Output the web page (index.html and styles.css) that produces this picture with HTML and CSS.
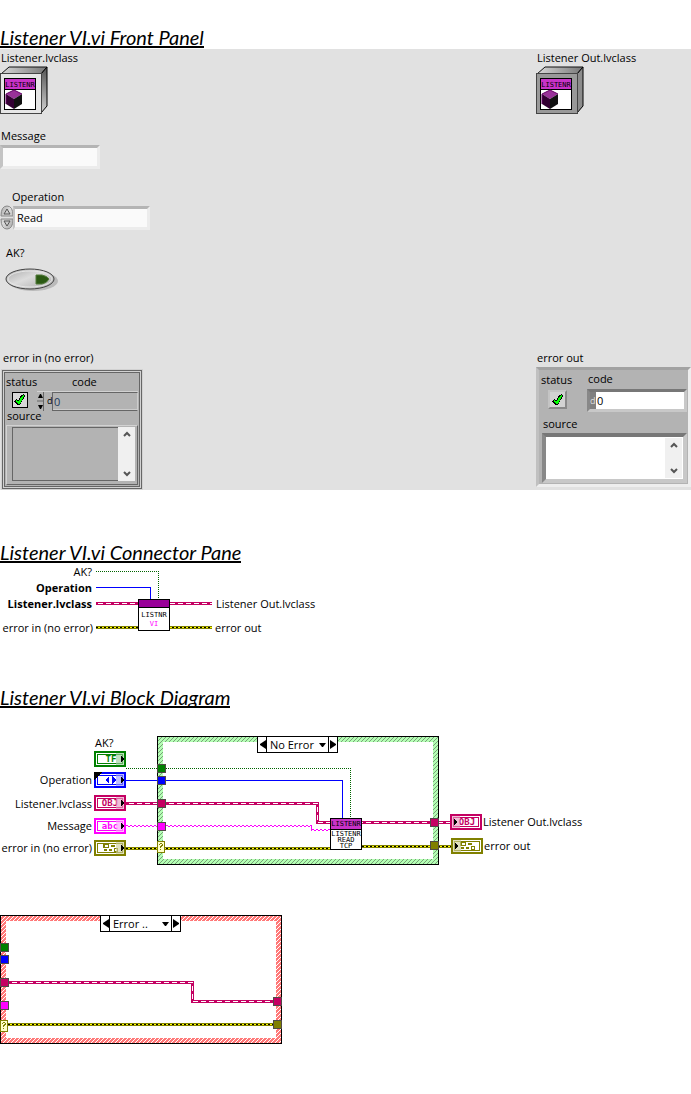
FILE: index.html
```html
<!DOCTYPE html>
<html lang="en">
<head>
<meta charset="utf-8">
<title>Listener VI.vi</title>
<link rel="stylesheet" href="styles.css">
</head>
<body>
<svg class="defs" width="0" height="0" aria-hidden="true">
  <defs>
    <linearGradient id="topFace" x1="0" x2="1" y1="0" y2="0"><stop offset="0" stop-color="#d8d8d8"/><stop offset="1" stop-color="#777"/></linearGradient>
    <linearGradient id="sideFace" x1="0" x2="0" y1="0" y2="1"><stop offset="0" stop-color="#555"/><stop offset="1" stop-color="#d0d0d0"/></linearGradient>
    <linearGradient id="metal" x1="0" x2="1" y1="0" y2="1"><stop offset="0" stop-color="#aaa"/><stop offset=".45" stop-color="#dcdcdc"/><stop offset="1" stop-color="#a8a8a8"/></linearGradient>
    <linearGradient id="hatchGreen" gradientUnits="userSpaceOnUse" x1="0" y1="0" x2="2" y2="2" spreadMethod="repeat"><stop offset=".625" stop-color="#b4ffb4"/><stop offset=".625" stop-color="#78a078"/><stop offset=".875" stop-color="#78a078"/><stop offset=".875" stop-color="#b4ffb4"/></linearGradient>
    <linearGradient id="hatchRed" gradientUnits="userSpaceOnUse" x1="0" y1="0" x2="2" y2="2" spreadMethod="repeat"><stop offset=".625" stop-color="#ff7878"/><stop offset=".625" stop-color="#fff"/><stop offset=".875" stop-color="#fff"/><stop offset=".875" stop-color="#ff7878"/></linearGradient>
    <symbol id="badge" viewBox="0 0 32 32">
      <rect width="32" height="32" fill="#000"/><rect x="1" y="1" width="30" height="10" fill="#c832c8"/><rect x="1" y="12" width="30" height="19" fill="#fff"/>
      <text class="pixel" x="16" y="9" text-anchor="middle">LISTENR</text>
      <g class="smooth"><path d="M2 16l8-4 8 4-8 5z" fill="#993299"/><path d="M2 16l8 5v10l-8-5z" fill="#330033"/><path d="M18 16l-8 5v10l8-5z" fill="#111"/>
      <path d="M2 26V16l8-4 8 4" fill="none" stroke="#660066"/></g>
    </symbol>
    <symbol id="tick" viewBox="0 0 12 12"><path d="M0 7l2-2 2 2 3-6 3-1 1 2-5 9H3z"/><path d="M1 7l1-1 2 2 4-6 2-1v1l-4 8H4z" fill="#0f0"/></symbol>
    <symbol id="chevUp" viewBox="0 0 8 6"><path class="smooth-path" d="M1 5l3-3 3 3" fill="none" stroke="#555" stroke-width="2"/></symbol>
    <symbol id="chevDown" viewBox="0 0 8 6"><path class="smooth-path" d="M1 1l3 3 3-3" fill="none" stroke="#555" stroke-width="2"/></symbol>
    <symbol id="terminal" viewBox="0 0 32 16"><rect width="32" height="16" fill="currentColor"/><rect x="2" y="2" width="28" height="12" fill="#fff"/><rect x="3" y="3" width="26" height="10" fill="currentColor"/><rect x="4" y="4" width="24" height="8" fill="#fff"/></symbol>
    <symbol id="inEdge" viewBox="0 0 32 16"><rect x="22" y="2" width="8" height="12" fill="#fff" opacity=".5"/><rect x="22" y="2" width="8" height="12" fill="currentColor" opacity=".25"/><path d="M27 5h1v1h1v1h1v2h-1v1h-1v1h-1z"/></symbol>
    <symbol id="outEdge" viewBox="0 0 32 16"><rect x="2" y="2" width="8" height="12" fill="#fff" opacity=".5"/><rect x="2" y="2" width="8" height="12" fill="currentColor" opacity=".25"/><path d="M4 5h1v1h1v1h1v2h-1v1h-1v1h-1z"/></symbol>
    <symbol id="clusterGlyph" viewBox="0 0 16 8"><path d="M1 0h6v4h-6zM9 1h4v2h-4zM2 5h3v2h-3zM7 5h3v2h-3zM12 4h4v4h-4z" fill="#808000"/><path d="M3 1h3v2h-3zM13 5h2v2h-2z" fill="#fff"/></symbol>
    <symbol id="help" viewBox="0 0 8 12"><rect width="8" height="12" fill="#808000"/><rect x="1" y="1" width="6" height="10" fill="#ffffc8"/><path d="M2 3h1v-1h2v1h1v2h-1v1h-1v1h-1v-2h1v-1h1v-1h-2v1h-1zM3 8h1v1h-1z" fill="#808000"/></symbol>
  </defs>
</svg>

<main>
<section>
  <h2 class="title">Listener VI.vi Front Panel</h2>
  <div class="panel">
    <div class="column">
      <div class="object">
        <span class="caption">Listener.lvclass</span>
        <svg class="cube" width="48" height="48" viewBox="0 0 48 48"><path d="M1 8l8-7h38l-6 7z" fill="url(#topFace)" stroke="#111"/><path d="M41 8l6-7v39l-6 7z" fill="url(#sideFace)" stroke="#000"/><rect y="7" width="42" height="41" fill="#444"/><rect x="1" y="8" width="40" height="39" fill="#e6e6e6"/><use href="#badge" x="4" y="12" width="32" height="32"/></svg>
      </div>
      <div class="object message">
        <label class="caption" for="message">Message</label>
        <input class="sunken" id="message" type="text">
      </div>
      <div class="object operation">
        <label class="caption" for="operation">Operation</label>
        <div class="ring">
          <button class="knob" type="button" aria-label="Change operation"><svg width="14" height="25" viewBox="0 0 14 25"><path d="M1 11Q1 1 7 1t6 10zM1 14Q1 24 7 24t6-10z" fill="url(#metal)" stroke="#888"/><path d="M4 9l3-5 3 5zM4 16h6l-3 5z" fill="#ccc" stroke="#555"/></svg></button>
          <input class="sunken" id="operation" type="text" value="Read">
        </div>
      </div>
      <div class="object ack">
        <span class="caption" id="ak">AK?</span>
        <button class="pill" type="button" aria-labelledby="ak"><svg width="56" height="28" viewBox="0 0 56 28"><ellipse cx="29" cy="16" rx="25" ry="10" fill="#aaa" opacity=".7"/><ellipse cx="26" cy="14" rx="24" ry="10" fill="url(#metal)" stroke="#444"/><ellipse cx="26" cy="14" rx="22" ry="8" fill="none" stroke="#e6e6e6"/><path d="M32 10h6q5 1 7 4-2 4-7 5h-6z" fill="#2b5a13" stroke="#527a3b"/></svg></button>
      </div>
      <div class="object error-in">
        <span class="caption">error in (no error)</span>
        <div class="cluster cluster-in">
          <label class="status"><span>status</span><span class="check"><input type="checkbox" checked><svg width="12" height="12"><use href="#tick"/></svg></span></label>
          <div class="code">
            <label for="code-in">code</label>
            <div class="numeric">
              <button class="step" type="button" aria-label="Step code"><svg width="7" height="20" viewBox="0 0 7 20"><path d="M1 6l2-4h1l2 4zM1 13h5l-2 4h-1z"/><path d="M0 9h7" stroke="#666"/></svg></button>
              <span class="radix">d</span><input id="code-in" type="text" value="0">
            </div>
          </div>
          <div class="source">
            <label for="source-in">source</label>
            <div class="scroller"><textarea id="source-in"></textarea><div class="bar"><svg width="8" height="6"><use href="#chevUp"/></svg><svg width="8" height="6"><use href="#chevDown"/></svg></div></div>
          </div>
        </div>
      </div>
    </div>
    <div class="column outputs">
      <div class="object">
        <span class="caption">Listener Out.lvclass</span>
        <svg class="cube" width="48" height="48" viewBox="0 0 48 48"><path d="M1 8l8-7h38l-6 7z" fill="url(#topFace)" stroke="#111"/><path d="M41 8l6-7v39l-6 7z" fill="#8c8c8c" stroke="#000"/><rect y="7" width="42" height="41" fill="#444"/><rect x="1" y="8" width="40" height="39" fill="#999"/><use href="#badge" x="4" y="12" width="32" height="32"/></svg>
      </div>
      <div class="object error-out">
        <span class="caption">error out</span>
        <div class="cluster cluster-out">
          <label class="status"><span>status</span><span class="check"><input type="checkbox" checked><svg width="12" height="12"><use href="#tick"/></svg></span></label>
          <div class="code">
            <label for="code-out">code</label>
            <div class="numeric"><span class="radix">d</span><input id="code-out" type="text" value="0" readonly></div>
          </div>
          <div class="source">
            <label for="source-out">source</label>
            <div class="scroller"><textarea id="source-out" readonly></textarea><div class="bar"><svg width="8" height="6"><use href="#chevUp"/></svg><svg width="8" height="6"><use href="#chevDown"/></svg></div></div>
          </div>
        </div>
      </div>
    </div>
  </div>
</section>

<section class="connector">
  <h2 class="title">Listener VI.vi Connector Pane</h2>
  <svg class="drawing" width="340" height="72" viewBox="0 0 340 72">
    <g class="wires" transform="translate(.5 .5)">
      <path class="bool" d="M95 8H158V36"/>
      <path class="enum" d="M95 24H150V36"/>
      <path class="obj" d="M95 40H211"/><path class="obj-core" d="M97 40H211"/>
      <path class="err" d="M95 64H211"/><path class="err-core" d="M95 64H211"/><path class="err-dash" d="M95 64H211"/>
    </g>
    <rect x="138" y="36" width="32" height="32"/><rect x="139" y="37" width="30" height="7" fill="#909"/><rect x="139" y="45" width="30" height="22" fill="#fff"/>
    <text class="pixel" x="154" y="54" text-anchor="middle">LISTNR</text>
    <text class="pixel magenta" x="154" y="63" text-anchor="middle">VI</text>
    <g class="names">
      <text class="end" x="92" y="13">AK?</text>
      <text class="end strong" x="92" y="29">Operation</text>
      <text class="end strong" x="92" y="45">Listener.lvclass</text>
      <text class="end" x="93" y="69">error in (no error)</text>
      <text x="216" y="45">Listener Out.lvclass</text>
      <text x="215" y="69">error out</text>
    </g>
  </svg>
</section>

<section class="block">
  <h2 class="title">Listener VI.vi Block Diagram</h2>
  <div class="canvas first">
    <svg class="drawing" width="600" height="129" viewBox="0 0 600 129">
      <rect x="157" width="282" height="129"/><rect x="158" y="1" width="280" height="127" fill="url(#hatchGreen)"/><rect x="163" y="6" width="270" height="117" fill="#fff"/>
      <g class="wires" transform="translate(.5 .5)">
        <path class="bool" d="M125 32H350V82"/>
        <path class="enum" d="M125 44H342V82"/>
        <path class="obj" d="M125 67H317V86H450"/><path class="obj-core" d="M128 67H317V86H450"/>
        <path class="str" d="M125 89H311M311 93H330"/><path class="str shifted" d="M125 90H311M311 94H330"/><path class="str-join" d="M311 89V94"/>
        <path class="err" d="M125 112H330M361 110H452"/><path class="err-core" d="M125 112H330M361 110H452"/><path class="err-dash" d="M125 112H330M361 110H452"/>
      </g>
      <g stroke="#504a46">
        <path d="M157 28h9v9h-9z" class="tunnel green"/><path d="M157 40h9v9h-9z" class="tunnel blue"/><path d="M157 63h9v9h-9z" class="tunnel crimson"/><path d="M157 86h9v9h-9z" class="tunnel pink"/><path d="M430 82h9v9h-9z" class="tunnel crimson"/><path d="M430 105h9v9h-9z" class="tunnel olive"/>
      </g>
      <use href="#help" x="157" y="105" width="8" height="12"/>
      <g color="#008000"><use href="#terminal" x="94" y="15" width="32" height="16"/><text class="kind" x="111" y="26">TF</text><use href="#inEdge" x="94" y="15" width="32" height="16"/></g>
      <g color="#0000ff"><use href="#terminal" x="94" y="36" width="32" height="16"/><path d="M109 40v8l-4-4zM112 40v8l4-4z" fill="#00f"/><use href="#inEdge" x="94" y="36" width="32" height="16"/><path d="M94 36h8l-8 8z"/></g>
      <g color="#c40062"><use href="#terminal" x="94" y="59" width="32" height="16"/><text class="kind" x="110" y="70">OBJ</text><use href="#inEdge" x="94" y="59" width="32" height="16"/></g>
      <g color="#ff00ff"><use href="#terminal" x="94" y="82" width="32" height="16"/><text class="kind" x="110" y="93">abc</text><use href="#inEdge" x="94" y="82" width="32" height="16"/></g>
      <g color="#808000"><use href="#terminal" x="94" y="104" width="32" height="16"/><use href="#clusterGlyph" x="102" y="108" width="16" height="8"/><use href="#inEdge" x="94" y="104" width="32" height="16"/></g>
      <g color="#c40062"><use href="#terminal" x="450" y="78" width="32" height="16"/><text class="kind" x="467" y="89">OBJ</text><use href="#outEdge" x="450" y="78" width="32" height="16"/></g>
      <g color="#808000"><use href="#terminal" x="451" y="102" width="32" height="16"/><use href="#clusterGlyph" x="459" y="106" width="16" height="8"/><use href="#outEdge" x="451" y="102" width="32" height="16"/></g>
      <rect x="330" y="82" width="32" height="32"/><rect x="331" y="83" width="30" height="10" fill="#c832c8"/><rect x="331" y="94" width="30" height="19" fill="#fff"/>
      <text class="pixel" x="346" y="90" text-anchor="middle">LISTENR</text>
      <text class="pixel" x="346" y="100" text-anchor="middle">LISTENR</text>
      <text class="pixel" x="346" y="106" text-anchor="middle">READ</text>
      <text class="pixel" x="346" y="112" text-anchor="middle">TCP</text>
      <g class="names">
        <text x="95" y="11">AK?</text>
        <text class="end" x="92" y="48">Operation</text>
        <text class="end" x="92" y="72">Listener.lvclass</text>
        <text class="end" x="92" y="94">Message</text>
        <text class="end" x="92" y="116">error in (no error)</text>
        <text x="483" y="90">Listener Out.lvclass</text>
        <text x="484" y="114">error out</text>
      </g>
    </svg>
    <div class="case-selector">
      <button type="button" aria-label="Previous case"><svg width="7" height="9" viewBox="0 0 7 9"><path d="M7 0v9L1 5V4z"/></svg></button>
      <span class="pick"><select aria-label="Case"><option>No Error</option><option>Error ..</option></select><svg width="7" height="4" viewBox="0 0 7 4"><path d="M0 0h7L4 4H3z"/></svg></span>
      <button type="button" aria-label="Next case"><svg width="7" height="9" viewBox="0 0 7 9"><path d="M0 0v9l6-4V4z"/></svg></button>
    </div>
  </div>
  <div class="canvas second">
    <svg class="drawing" width="282" height="129" viewBox="0 0 282 129">
      <rect width="282" height="129"/><rect x="1" y="1" width="280" height="127" fill="url(#hatchRed)"/><rect x="6" y="6" width="270" height="117" fill="#fff"/>
      <g class="wires" transform="translate(.5 .5)">
        <path class="obj" d="M8 67H192V86H273"/><path class="obj-core" d="M11 67H192V86H273"/>
        <path class="err" d="M7 109H273"/><path class="err-core" d="M7 109H273"/><path class="err-dash" d="M7 109H273"/>
      </g>
      <g stroke="#504a46">
        <path d="M0 28h9v9h-9z" class="tunnel green"/><path d="M0 40h9v9h-9z" class="tunnel blue"/><path d="M0 63h9v9h-9z" class="tunnel crimson"/><path d="M0 86h9v9h-9z" class="tunnel pink"/><path d="M273 82h9v9h-9z" class="tunnel crimson"/><path d="M273 105h9v9h-9z" class="tunnel olive"/>
      </g>
      <use href="#help" x="0" y="105" width="8" height="12"/>
    </svg>
    <div class="case-selector">
      <button type="button" aria-label="Previous case"><svg width="7" height="9" viewBox="0 0 7 9"><path d="M7 0v9L1 5V4z"/></svg></button>
      <span class="pick"><select aria-label="Case"><option>Error ..</option><option>No Error</option></select><svg width="7" height="4" viewBox="0 0 7 4"><path d="M0 0h7L4 4H3z"/></svg></span>
      <button type="button" aria-label="Next case"><svg width="7" height="9" viewBox="0 0 7 9"><path d="M0 0v9l6-4V4z"/></svg></button>
    </div>
  </div>
</section>
</main>
</body>
</html>
```
FILE: styles.css
```css
* { box-sizing: border-box; }
body { margin: 0; background: #fff; color: #000; font: 11px/16px "Open Sans", "Noto Sans", sans-serif; }
main { padding: 28px 0 50px; }
button, input, select, textarea { margin: 0; padding: 0; border: 0; border-radius: 0; background: none; color: inherit; font: inherit; appearance: none; outline: 0; }
svg { display: block; flex: none; }
.defs { position: absolute; }

.title { width: fit-content; height: 20px; margin: 0; border-bottom: 2px solid #000; font: italic 400 20px/18px Lato, "Open Sans", sans-serif; white-space: nowrap; }
.pixel { font: 7px "DejaVu Sans Mono", monospace; }
.magenta { fill: #f0f; }

/* Front panel */
.panel { display: flex; justify-content: space-between; padding-top: 1px; background: #e1e1e1; margin-top: 1px; }
.column { display: flex; flex-direction: column; }
.outputs { width: 155px; }
.object { display: flex; flex-direction: column; align-items: flex-start; }
.caption { padding-left: 1px; }
.message { margin-top: 14px; gap: 1px; }
.operation { margin-top: 20px; }
.operation .caption { padding-left: 12px; }
.sunken { border: 3px solid; border-color: #b4b4b4 #ececec #ececec #c4c4c4; background: #fafafa; height: 24px; width: 100px; }
.ring { display: flex; align-items: center; }
.knob { width: 13px; height: 25px; }
.ring .sunken { width: 137px; padding-left: 2px; border-left-width: 2px; }
.ack { margin: 15px 0 57px; }
.ack .caption { padding-left: 6px; }
.pill { margin: 4px 0 0 4px; }
.error-in .caption { padding-left: 3px; }
.error-out { margin-top: 236px; }

/* Error clusters */
.cluster { display: grid; background: #b3b3b3; }
.cluster label { line-height: 16px; }
.check { display: grid; place-items: center; }
.check > * { grid-area: 1 / 1; }
.check input { width: 100%; height: 100%; }
.check svg { pointer-events: none; }
.status, .code, .source { display: flex; flex-direction: column; align-items: flex-start; min-width: 0; }
.source { grid-column: 1 / -1; }
.numeric, .scroller { display: flex; width: 100%; }
.numeric input { flex: 1; width: 0; min-width: 0; }
.scroller textarea { flex: 1; width: 0; min-width: 0; height: 100%; resize: none; }
.bar { display: flex; flex-direction: column; justify-content: space-between; align-items: center; width: 17px; padding: 4px 0; background: #f0f0f0; }

.cluster-in { grid-template-columns: 29px minmax(0, 1fr); width: 142px; height: 121px; margin: 3px 0 0 1px; padding: 5px; box-shadow: inset 0 0 0 1px #d2d2d2, inset 0 0 0 2px #666, inset 0 0 0 3px #d2d2d2, inset 0 0 0 4px #666; align-content: start; }
.cluster-in .check { width: 16px; height: 16px; margin: 2px 0 0 6px; border: 1px solid #000; background: #d8d8d8; }
.cluster-in .code label { padding-left: 37px; }
.cluster-in .numeric { height: 20px; margin-top: 1px; margin-left: 2px; width: 101px; border: solid #d2d2d2; border-width: 1px 0 0; }
.cluster-in .step { width: 7px; border-right: 1px solid #666; }
.cluster-in .radix { width: 8px; padding-left: 3px; font-size: 9px; line-height: 18px; }
.cluster-in .numeric input { border: 1px solid #666; border-right-color: #ccc; box-shadow: inset 0 -1px #ccc; padding-left: 1px; color: #223a5a; }
.cluster-in .source { margin-top: -3px; }
.cluster-in .source label { padding-left: 1px; }
.cluster-in .scroller { height: 60px; margin-top: 1px; border: 1px solid; border-color: #d2d2d2 #666 #666 #d2d2d2; padding: 1px 2px 3px 5px; }
.cluster-in textarea { border: 1px solid #666; border-right: 0; }

.cluster-out { grid-template-columns: 46px minmax(0, 1fr); width: 155px; height: 120px; margin: 1px 0 3px; border: 3px solid; border-color: #a2a2a2 #eee #eee #c0c0c0; padding: 1px 1px 0 2px; align-content: start; }
.cluster-out .status { padding-top: 1px; }
.cluster-out .check { width: 19px; height: 19px; margin: 2px 0 0 7px; border: 2px solid; border-color: #c4c4c4 #888 #888 #c4c4c4; background: #d2d2d2; }
.cluster-out .code label { padding-left: 1px; }
.cluster-out .numeric { height: 23px; margin-top: 2px; border: 3px solid; border-color: #777 #c8c8c8 #c8c8c8 #888; background: #fff; }
.cluster-out .radix { width: 6px; color: #ddd; background: #808080; font-size: 9px; line-height: 17px; }
.cluster-out .numeric input { padding-left: 1px; }
.cluster-out .source { margin-top: 4px; padding-left: 1px; }
.cluster-out .source label { padding-left: 1px; }
.cluster-out .scroller { height: 50px; margin-top: 1px; border: 4px solid; border-color: #777 #c8c8c8 #c8c8c8 #888; background: #fff; padding: 1px; }

/* Diagrams */
.connector { margin-top: 53px; }
.block { margin-top: 53px; }
.canvas { position: relative; }
.first { margin-top: 28px; }
.second { margin-top: 50px; }
.names { font-size: 11px; }
.end { text-anchor: end; }
.strong { font-weight: 700; }
.kind { font: 700 9px "DejaVu Sans Mono", monospace; text-anchor: middle; fill: currentColor; }
.drawing rect, .drawing path, symbol rect, symbol path, .cube rect { shape-rendering: crispEdges; }
symbol .smooth path, symbol .smooth-path { shape-rendering: auto; }
.wires { fill: none; }
.bool { stroke: #006400; stroke-dasharray: 1 1; }
.enum { stroke: #00f; }
.obj { stroke: #c40062; stroke-width: 3; }
.obj-core { stroke: #fff; stroke-dasharray: 5 3; }
.err { stroke: #808000; stroke-width: 3; }
.err-core { stroke: #ff0; }
.err-dash { stroke: #000; stroke-dasharray: 2 2; }
.str { stroke: #f0f; stroke-dasharray: 2 2; }
.shifted { stroke-dashoffset: 2; }
.str-join { stroke: #f0f; }
.tunnel { stroke-width: 2; clip-path: fill-box; }
.green { fill: #008000; }
.blue { fill: #00f; }
.crimson { fill: #c40062; }
.pink { fill: #f0f; }
.olive { fill: #808000; }
.case-selector { position: absolute; top: 0; left: 257px; display: flex; width: 81px; height: 17px; border: 1px solid #000; background: #fff; }
.second .case-selector { left: 100px; }
.case-selector button { display: grid; place-items: center; width: 8px; }
.pick { display: flex; align-items: center; flex: 1; border: solid #000; border-width: 0 1px; padding: 0 2px 0 3px; }
.pick select { flex: 1; min-width: 0; height: 15px; line-height: 15px; }
```
